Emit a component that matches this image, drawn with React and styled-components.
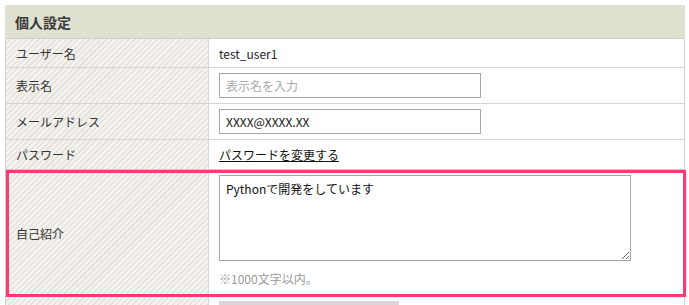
import React from "react";
import styled, { createGlobalStyle } from "styled-components";

const Global = createGlobalStyle`
  html, body { margin: 0; padding: 0; background: #fff; }
  body {
    font-family: "Lucida Grande", "Noto Sans CJK JP", "Noto Sans", sans-serif;
    color: #333;
    font-size: 12px;
    overflow: hidden;
  }
`;

const Page = styled.div`
  padding: 5px 5px 0 5px;
  width: 680px;
`;

const Panel = styled.section`
  border-right: 1px solid #d2d2d2;
  border-left: 1px solid #d2d2d2;
`;

const Header = styled.h2`
  box-sizing: border-box;
  margin: 0 -1px;
  height: 34px;
  display: flex;
  align-items: center;
  padding-left: 10px;
  background: #e0e0d1;
  border-bottom: 1px solid #cfcfc4;
  font-size: 14px;
  font-weight: bold;
  color: #3a3a3a;
  border-top-right-radius: 2px;
`;

const Row = styled.div`
  box-sizing: border-box;
  display: grid;
  grid-template-columns: 203px 1fr;
  height: ${(p) => p.$h}px;
  border-bottom: 1px solid #d4d4d4;
  position: relative;
  &::after {
    content: "";
    display: ${(p) => (p.$highlight ? "block" : "none")};
    position: absolute;
    left: 0;
    right: -2px;
    top: 0;
    bottom: -1px;
    border: 3px solid #ff3a73;
    box-shadow: 0 0 1px rgba(255, 58, 115, 0.6);
    pointer-events: none;
  }
`;

const Label = styled.div`
  display: flex;
  align-items: center;
  padding-left: 10px;
  border-right: 1px solid #d8d8d8;
  background-color: #f4f3ef;
  background-image: repeating-linear-gradient(
    -45deg,
    #f4f3ef 0px,
    #f4f3ef 2.5px,
    #e4e2db 2.5px,
    #e4e2db 4px
  );
  font-size: 12px;
  color: #333;
`;

const Value = styled.div`
  display: flex;
  flex-direction: ${(p) => (p.$column ? "column" : "row")};
  align-items: ${(p) => (p.$column ? "flex-start" : "center")};
  padding: ${(p) => (p.$column ? `${p.$top ?? 5}px 0 0 10px` : "0 0 0 10px")};
  font-size: 12px;
  color: #222;
`;

const TextInput = styled.input`
  box-sizing: border-box;
  width: 262px;
  height: 25px;
  border: 1px solid #a6a6a6;
  padding: 0 6px;
  font-family: inherit;
  font-size: 12px;
  color: #111;
  outline: none;
  &::placeholder { color: #aaa; }
`;

const Link = styled.a`
  color: #111;
  text-decoration: underline;
  font-size: 12px;
  cursor: pointer;
`;

const TextArea = styled.textarea`
  box-sizing: border-box;
  width: 412px;
  height: 86px;
  border: 1px solid #a6a6a6;
  padding: 4px 6px;
  font-family: inherit;
  font-size: 12px;
  line-height: 18px;
  color: #111;
  resize: both;
  outline: none;
`;

const Note = styled.p`
  margin: 9px 0 0 0;
  font-size: 12px;
  color: #999;
`;

const Button = styled.div`
  width: 180px;
  height: 30px;
  background: #d8d8d8;
`;

export default function App() {
  return (
    <>
      <Global />
      <Page>
        <Panel>
          <Header>個人設定</Header>
          <Row $h={29}>
            <Label>ユーザー名</Label>
            <Value>test_user1</Value>
          </Row>
          <Row $h={36}>
            <Label>表示名</Label>
            <Value>
              <TextInput placeholder="表示名を入力" />
            </Value>
          </Row>
          <Row $h={36}>
            <Label>メールアドレス</Label>
            <Value>
              <TextInput defaultValue="XXXX@XXXX.XX" />
            </Value>
          </Row>
          <Row $h={30}>
            <Label>パスワード</Label>
            <Value>
              <Link>パスワードを変更する</Link>
            </Value>
          </Row>
          <Row $h={127} $highlight>
            <Label>自己紹介</Label>
            <Value $column>
              <TextArea defaultValue="Pythonで開発をしています" />
              <Note>※1000文字以内。</Note>
            </Value>
          </Row>
          <Row $h={40}>
            <Label></Label>
            <Value $column $top={4}>
              <Button />
            </Value>
          </Row>
        </Panel>
      </Page>
    </>
  );
}
